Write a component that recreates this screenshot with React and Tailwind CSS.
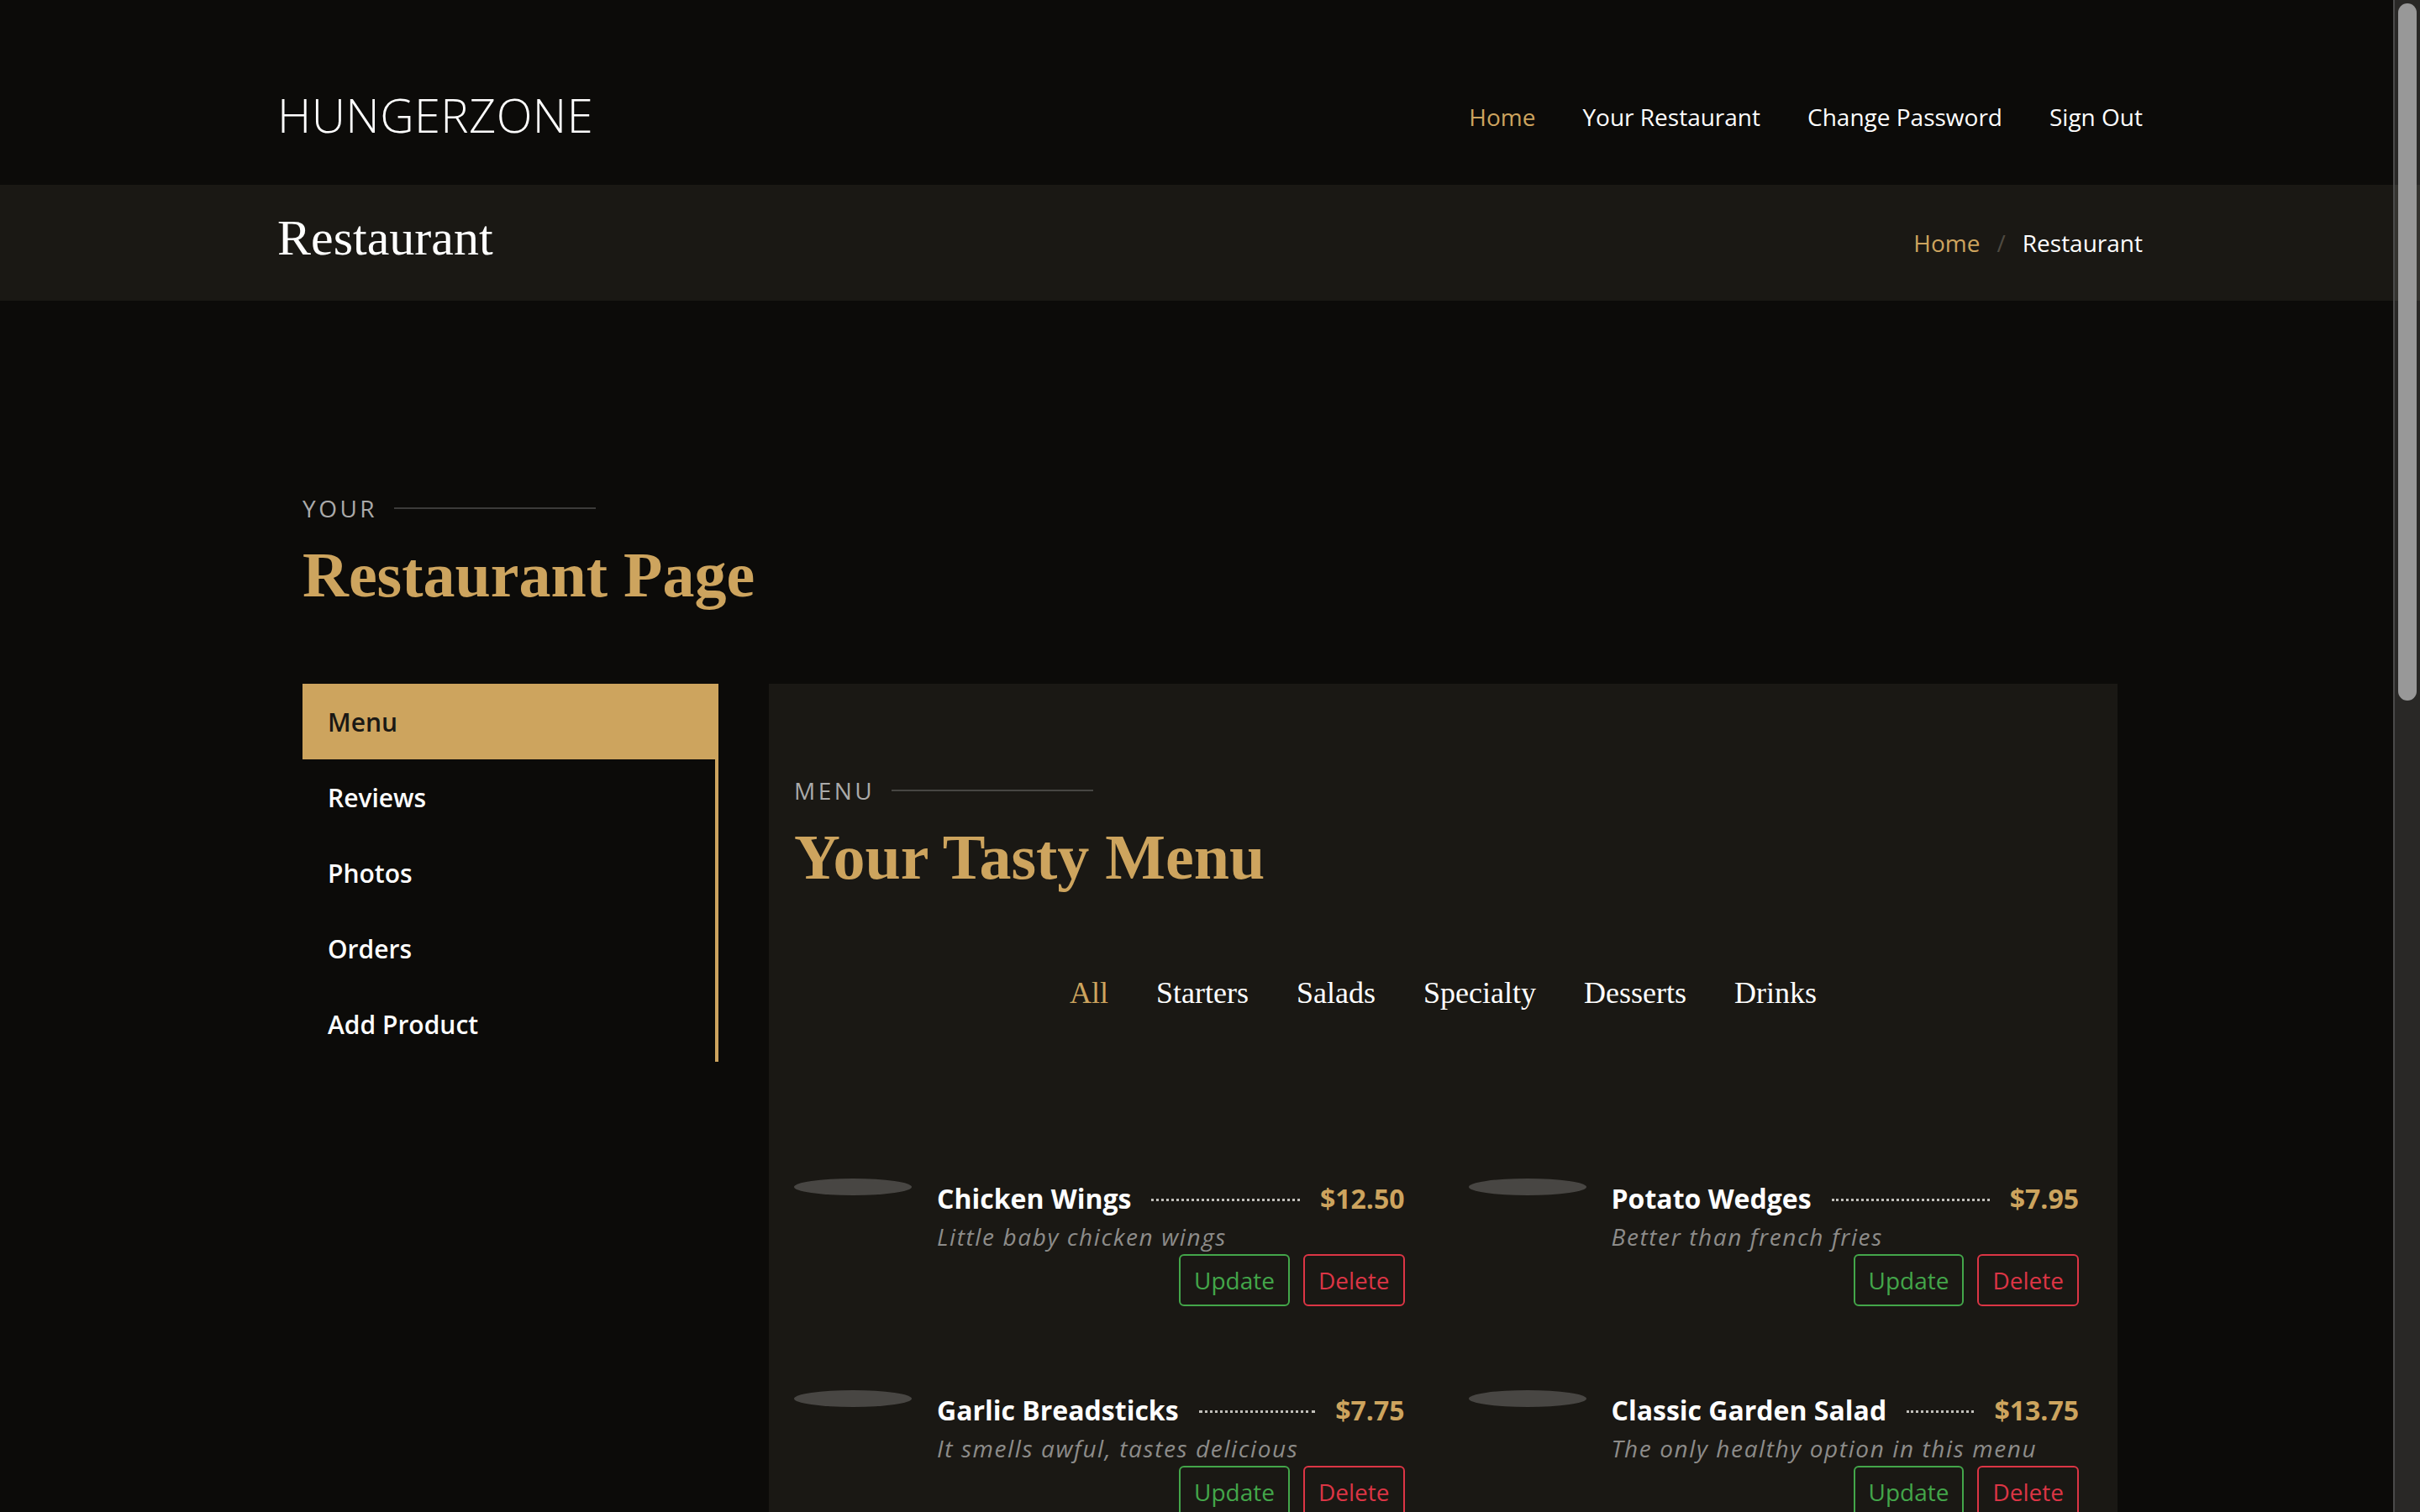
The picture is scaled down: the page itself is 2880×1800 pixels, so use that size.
const navLinks = ['Home', 'Your Restaurant', 'Change Password', 'Sign Out'];
const sideItems = ['Menu', 'Reviews', 'Photos', 'Orders', 'Add Product'];
const filters = ['All', 'Starters', 'Salads', 'Specialty', 'Desserts', 'Drinks'];

const menuItems = [
  { name: 'Chicken Wings', price: '$12.50', desc: 'Little baby chicken wings' },
  { name: 'Potato Wedges', price: '$7.95', desc: 'Better than french fries' },
  { name: 'Garlic Breadsticks', price: '$7.75', desc: 'It smells awful, tastes delicious' },
  { name: 'Classic Garden Salad', price: '$13.75', desc: 'The only healthy option in this menu' },
  { name: 'Caesar Salad', price: '$9.50', desc: 'Crisp romaine and parmesan' },
  { name: 'Chocolate Cake', price: '$6.25', desc: 'Rich and moist' },
];

function SectionTitle({ eyebrow, title }) {
  return (
    <div>
      <div className="flex items-center h-[42px]">
        <span className="font-['Open_Sans',sans-serif] text-[28px] leading-[42px] font-medium tracking-[3.5px] uppercase text-[#aaaaaa]">
          {eyebrow}
        </span>
        <span className="ml-[20px] w-[240px] h-[2px] bg-white/20" />
      </div>
      <p className="mt-[12px] font-['Liberation_Serif',serif] font-bold text-[76px] leading-[92px] text-[#cda45e]">
        {title}
      </p>
    </div>
  );
}

function MenuItem({ item }) {
  return (
    <div className="flex items-start pr-[16px] mb-[100px]">
      <div className="w-[140px] h-[20px] shrink-0 rounded-[50%] bg-[#484643]" />
      <div className="flex-1 ml-[30px]">
        <div className="flex items-center h-[48px] text-[32px] leading-[48px] font-bold">
          <span className="text-white">{item.name}</span>
          <span className="flex-1 mx-[24px] mt-[2px] border-t-[3px] border-dotted border-[#c2c0bb]" />
          <span className="text-[#cda45e]">{item.price}</span>
        </div>
        <p className="text-[28px] leading-[42px] italic tracking-[1.6px] text-[#8d8c8a]">{item.desc}</p>
        <div className="flex justify-end gap-[16px]">
          <button className="px-[16px] py-[8px] text-[28px] leading-[42px] border-2 border-[#43a64a] text-[#43a64a] rounded-[6px]">
            Update
          </button>
          <button className="px-[16px] py-[8px] text-[28px] leading-[42px] border-2 border-[#dc3545] text-[#dc3545] rounded-[6px]">
            Delete
          </button>
        </div>
      </div>
    </div>
  );
}

export default function App() {
  return (
    <div className="relative h-[1800px] overflow-hidden bg-[#0c0b09] font-['Open_Sans',sans-serif] text-white">
      {/* Header */}
      <header className="h-[220px] pt-[52px]">
        <div className="w-[2280px] mx-auto px-[30px] h-full flex items-center justify-between">
          <h1 className="text-[56px] leading-[72px] font-light tracking-[0.4px] text-white uppercase">Hungerzone</h1>
          <nav className="flex items-center gap-[56px] mt-[6px]">
            {navLinks.map((l, i) => (
              <a key={l} className={`text-[28px] leading-[42px] ${i === 0 ? 'text-[#cda45e]' : 'text-white'}`}>
                {l}
              </a>
            ))}
          </nav>
        </div>
      </header>

      {/* Breadcrumbs */}
      <section className="h-[138px] bg-[#1a1814]">
        <div className="w-[2280px] mx-auto px-[30px] h-full flex items-center justify-between">
          <h2 className="font-['Liberation_Serif',serif] text-[60px] leading-[72px] mb-[12px] text-white">Restaurant</h2>
          <ol className="flex items-center gap-[20px] text-[28px] leading-[42px]">
            <li className="text-[#cda45e]">Home</li>
            <li className="text-[#4f4a41]">/</li>
            <li className="text-white">Restaurant</li>
          </ol>
        </div>
      </section>

      {/* Restaurant page */}
      <section className="pt-[226px]">
        <div className="w-[2280px] mx-auto px-[30px]">
          <div className="px-[30px]">
            <SectionTitle eyebrow="Your" title="Restaurant Page" />
          </div>

          <div className="flex items-start mt-[84px]">
            {/* Sidebar */}
            <div className="w-[555px] px-[30px] shrink-0">
              <ul className="border-r-4 border-[#cda45e]">
                {sideItems.map((s, i) => (
                  <li
                    key={s}
                    className={`h-[90px] flex items-center px-[30px] text-[30px] font-semibold ${
                      i === 0 ? 'bg-[#cda45e] text-[#1a1814]' : 'text-white'
                    }`}
                  >
                    {s}
                  </li>
                ))}
              </ul>
            </div>

            {/* Menu panel */}
            <div className="flex-1 px-[30px]">
              <div className="bg-[#1a1814] px-[30px] pt-[106px]">
                <SectionTitle eyebrow="Menu" title="Your Tasty Menu" />

                <ul className="mt-[89px] flex justify-center gap-[57px] font-['Liberation_Serif',serif] text-[36px] leading-[54px]">
                  {filters.map((f, i) => (
                    <li key={f} className={i === 0 ? 'text-[#cda45e]' : 'text-white'}>
                      {f}
                    </li>
                  ))}
                </ul>

                <div className="mt-[194px] grid grid-cols-2 gap-x-[60px]">
                  {menuItems.map((m) => (
                    <MenuItem key={m.name} item={m} />
                  ))}
                </div>
              </div>
            </div>
          </div>
        </div>
      </section>

      {/* Overlay scrollbar */}
      <div className="fixed top-0 right-0 h-full w-[32px] bg-white/[0.12] border-l-2 border-[#4a4a4a]">
        <div className="mt-[4px] ml-[4px] w-[22px] h-[830px] rounded-full bg-[#989898]" />
      </div>
    </div>
  );
}
